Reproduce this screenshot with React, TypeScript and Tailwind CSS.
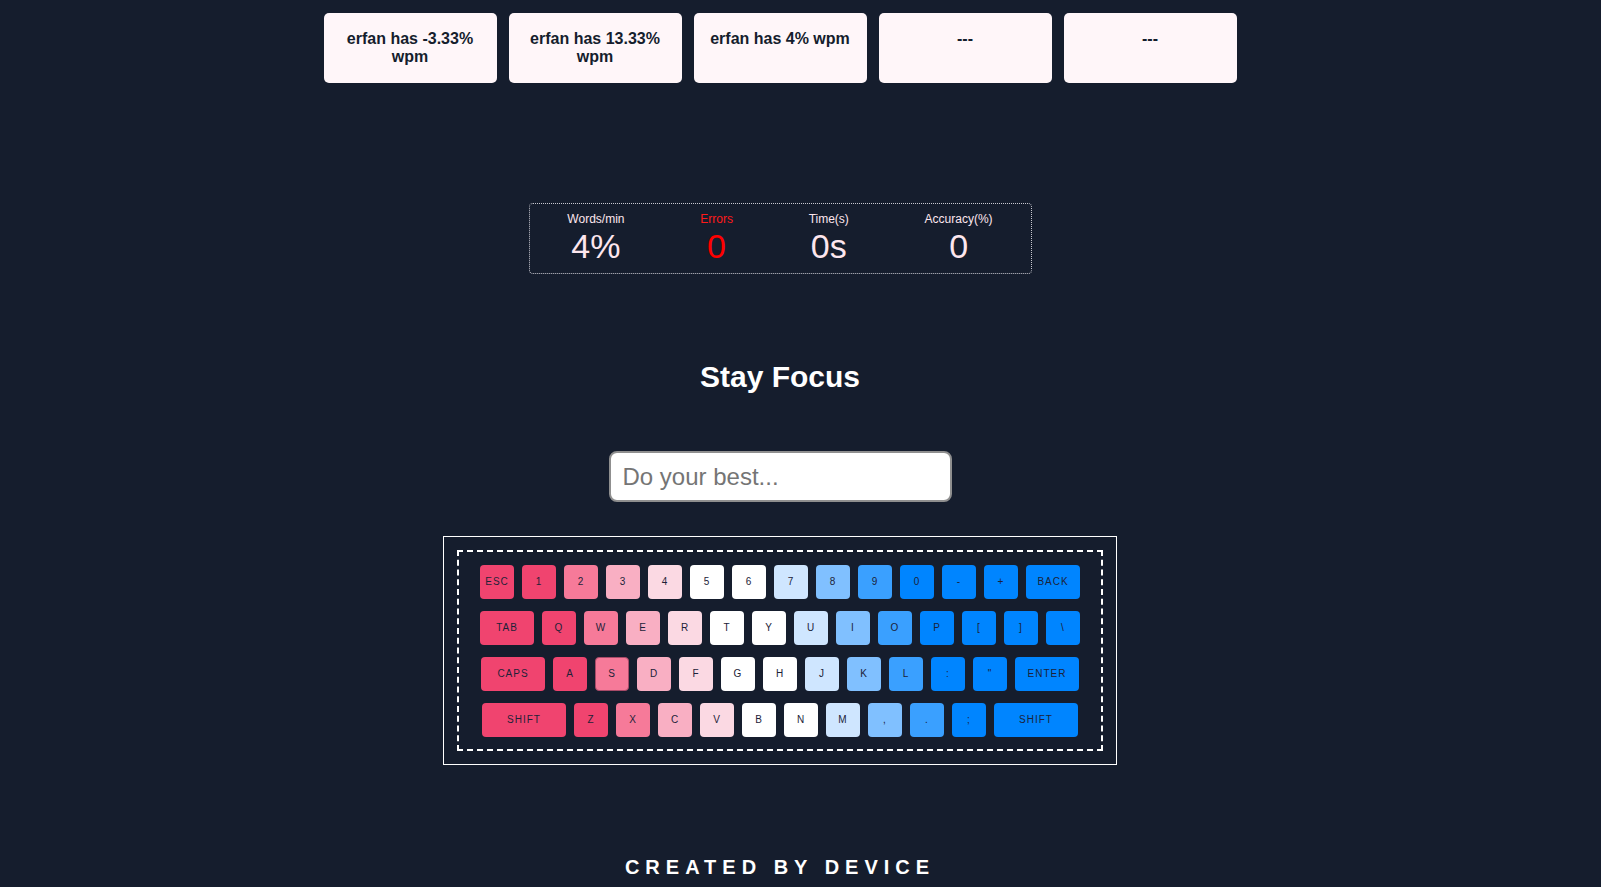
import React from "react";

type Key = { label: string; tone: number; w?: string; active?: boolean };

// tone index -> key colour, deep pink through white to strong blue
const tones = [
  "bg-[#f0446f]",
  "bg-[#f67a99]",
  "bg-[#f9afc3]",
  "bg-[#fbd9e3]",
  "bg-white",
  "bg-[#cfe6ff]",
  "bg-[#80c0ff]",
  "bg-[#3aa0ff]",
  "bg-[#0085ff]",
];

const rows: Key[][] = [
  [
    { label: "ESC", tone: 0 },
    { label: "1", tone: 0 },
    { label: "2", tone: 1 },
    { label: "3", tone: 2 },
    { label: "4", tone: 3 },
    { label: "5", tone: 4 },
    { label: "6", tone: 4 },
    { label: "7", tone: 5 },
    { label: "8", tone: 6 },
    { label: "9", tone: 7 },
    { label: "0", tone: 8 },
    { label: "-", tone: 8 },
    { label: "+", tone: 8 },
    { label: "BACK", tone: 8, w: "w-[54px]" },
  ],
  [
    { label: "TAB", tone: 0, w: "w-[54px]" },
    { label: "Q", tone: 0 },
    { label: "W", tone: 1 },
    { label: "E", tone: 2 },
    { label: "R", tone: 3 },
    { label: "T", tone: 4 },
    { label: "Y", tone: 4 },
    { label: "U", tone: 5 },
    { label: "I", tone: 6 },
    { label: "O", tone: 7 },
    { label: "P", tone: 8 },
    { label: "[", tone: 8 },
    { label: "]", tone: 8 },
    { label: "\\", tone: 8 },
  ],
  [
    { label: "CAPS", tone: 0, w: "w-[64px]" },
    { label: "A", tone: 0 },
    { label: "S", tone: 1, active: true },
    { label: "D", tone: 2 },
    { label: "F", tone: 3 },
    { label: "G", tone: 4 },
    { label: "H", tone: 4 },
    { label: "J", tone: 5 },
    { label: "K", tone: 6 },
    { label: "L", tone: 7 },
    { label: ":", tone: 8 },
    { label: '"', tone: 8 },
    { label: "ENTER", tone: 8, w: "w-[64px]" },
  ],
  [
    { label: "SHIFT", tone: 0, w: "w-[84px]" },
    { label: "Z", tone: 0 },
    { label: "X", tone: 1 },
    { label: "C", tone: 2 },
    { label: "V", tone: 3 },
    { label: "B", tone: 4 },
    { label: "N", tone: 4 },
    { label: "M", tone: 5 },
    { label: ",", tone: 6 },
    { label: ".", tone: 7 },
    { label: ";", tone: 8 },
    { label: "SHIFT", tone: 8, w: "w-[84px]" },
  ],
];

const scores = ["erfan has -3.33% wpm", "erfan has 13.33% wpm", "erfan has 4% wpm", "---", "---"];

const stats = [
  { label: "Words/min", value: "4%", red: false },
  { label: "Errors", value: "0", red: true },
  { label: "Time(s)", value: "0s", red: false },
  { label: "Accuracy(%)", value: "0", red: false },
];

export default function App() {
  return (
    <div className="min-h-screen w-full bg-[#151d2d] font-['Liberation_Sans',Arial,sans-serif]">
      <div className="w-[1560px] flex flex-col items-center">
        {/* leaderboard cards */}
        <div className="flex gap-3 pt-[13px]">
          {scores.map((s, i) => (
            <div
              key={i}
              className="w-[173px] h-[70px] rounded-[5px] bg-[#fff6f9] px-4 pt-[17px] text-center text-[16px] leading-[18px] font-bold text-[#151d2d]"
            >
              {s}
            </div>
          ))}
        </div>

        {/* stats */}
        <div className="mt-[120px] w-[503px] h-[71px] border border-dotted border-[#c8c8d0] rounded-sm py-2 flex justify-around">
          {stats.map((s) => (
            <div key={s.label} className="flex flex-col items-center">
              <span className={`text-[12px] leading-[14px] ${s.red ? "text-[#ff1a1a]" : "text-[#fde6ee]"}`}>
                {s.label}
              </span>
              <span className={`text-[34px] leading-[40px] ${s.red ? "text-[#ff0000]" : "text-[#fde6ee]"}`}>
                {s.value}
              </span>
            </div>
          ))}
        </div>

        <h1 className="mt-[85px] text-[30px] leading-[35px] font-bold text-white">Stay Focus</h1>

        <input
          type="text"
          placeholder="Do your best..."
          className="mt-[57px] w-[343px] h-[51px] rounded-lg border-2 border-[#8f8f8f] bg-white px-3 text-[24px] text-[#333] placeholder:text-[#757575] outline-none"
        />

        {/* keyboard */}
        <div className="mt-[34px] w-[674px] h-[229px] border border-white p-[13px]">
          <div className="h-full border-2 border-dashed border-white flex flex-col items-center justify-center gap-3">
            {rows.map((row, ri) => (
              <div key={ri} className="flex gap-2">
                {row.map((k, ki) => (
                  <div
                    key={ki}
                    className={`${k.w ?? "w-[34px]"} h-[34px] rounded ${tones[k.tone]} ${
                      k.active ? "border border-[#a84a68]" : ""
                    } flex items-center justify-center text-[10px] tracking-[1px] text-[#1c2238]`}
                  >
                    {k.label}
                  </div>
                ))}
              </div>
            ))}
          </div>
        </div>

        <footer className="mt-[90px] pb-6 text-[20px] leading-[24px] font-bold tracking-[6px] text-white">
          CREATED BY DEVICE
        </footer>
      </div>
    </div>
  );
}
